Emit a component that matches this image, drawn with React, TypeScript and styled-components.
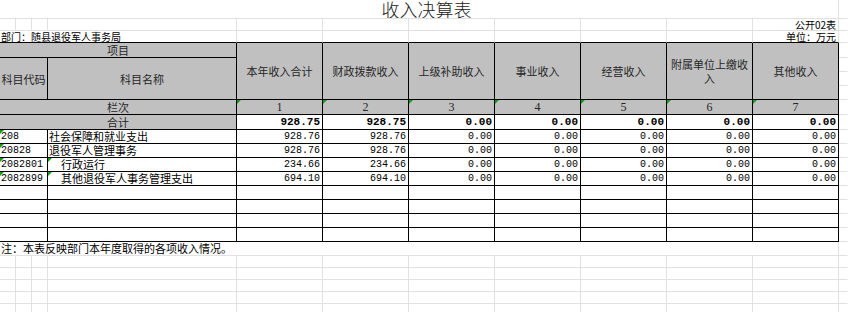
import React from 'react'
import styled, { createGlobalStyle, css } from 'styled-components'

const GlobalStyle = createGlobalStyle`
  html, body {
    margin: 0;
    padding: 0;
    background: #fff;
  }
  body {
    font-family: "Noto Sans CJK SC", "Noto Sans", sans-serif;
  }
`

type Edge = 'ink' | 'grid' | 'none'

const edge = (e: Edge = 'grid') =>
  e === 'ink' ? '1px solid #000' : e === 'grid' ? '1px solid #e1e1e1' : '1px solid transparent'

const Sheet = styled.table`
  border-collapse: separate;
  border-spacing: 0;
  table-layout: fixed;
  width: 848px;
  font-family: "Noto Sans CJK SC", sans-serif;
  font-size: 11px;
  color: #000;
`

const Col = styled.col<{ $w: number }>`
  width: ${({ $w }) => $w}px;
`

const Row = styled.tr<{ $h: number }>`
  height: ${({ $h }) => $h}px;
`

const Cell = styled.td<{ $r?: Edge; $b?: Edge; $align?: 'left' | 'center' | 'right' }>`
  position: relative;
  box-sizing: border-box;
  padding: 0 1px;
  border-right: ${({ $r }) => edge($r)};
  border-bottom: ${({ $b }) => edge($b)};
  text-align: ${({ $align }) => $align || 'left'};
  vertical-align: bottom;
  white-space: nowrap;
  overflow: hidden;
  line-height: 11px;
`

const TitleCell = styled(Cell)`
  padding-left: 16px;
  font-size: 18px;
  font-weight: 300;
  line-height: 18px;
  text-align: center;
  color: #222;
`

const LabelCell = styled(Cell)`
  font-size: 10px;
  line-height: 11px;
  padding-right: 2px;
`

const HeadCell = styled(Cell)<{ $tight?: boolean }>`
  background: #c0c0c0;
  color: #262626;
  text-align: center;
  vertical-align: middle;
  white-space: ${({ $tight }) => ($tight ? 'nowrap' : 'normal')};
  line-height: 14px;
  padding: 0 ${({ $tight }) => ($tight ? '0' : '4px')};
`

const IndexCell = styled(HeadCell)`
  font-family: "Liberation Serif", "Noto Sans CJK SC", serif;
  font-size: 12px;
  line-height: 13px;
  vertical-align: bottom;
`

const CodeCell = styled(Cell)`
  font-family: "Liberation Mono", monospace;
  font-size: 10px;
  line-height: 12px;
  vertical-align: middle;
`

const NameCell = styled(Cell)<{ $indent?: boolean }>`
  padding-left: ${({ $indent }) => ($indent ? '13px' : '1px')};
  line-height: 13px;
  vertical-align: middle;
`

const NumCell = styled(Cell)<{ $bold?: boolean }>`
  font-family: "Liberation Mono", monospace;
  text-align: right;
  padding-right: 2px;
  line-height: 12px;
  vertical-align: middle;
  ${({ $bold }) =>
    $bold
      ? css`
          font-size: 11px;
          font-weight: bold;
        `
      : css`
          font-size: 10px;
        `}
`

const NoteCell = styled(Cell)`
  line-height: 13px;
  vertical-align: middle;
`

const Flag = styled.span`
  position: absolute;
  top: 0;
  left: 0;
  width: 0;
  height: 0;
  border-top: 4px solid #11a011;
  border-right: 4px solid transparent;
`

const widths = [16, 16, 16, 189, 86, 86, 86, 86, 86, 86, 86, 9]

const heads = ['本年收入合计', '财政拨款收入', '上级补助收入', '事业收入', '经营收入', '附属单位上缴收入', '其他收入']

const rows = [
  { code: '208', name: '社会保障和就业支出', indent: false, values: ['928.76', '928.76'] },
  { code: '20828', name: '退役军人管理事务', indent: false, values: ['928.76', '928.76'] },
  { code: '2082801', name: '行政运行', indent: true, values: ['234.66', '234.66'] },
  { code: '2082899', name: '其他退役军人事务管理支出', indent: true, values: ['694.10', '694.10'] },
]

const zeros = ['0.00', '0.00', '0.00', '0.00', '0.00']

function Blanks({ count, r = 'grid', b = 'grid' }: { count: number; r?: Edge; b?: Edge }) {
  return (
    <>
      {Array.from({ length: count }, (_, i) => (
        <Cell key={i} $r={r} $b={b} />
      ))}
    </>
  )
}

// the narrow column cut off by the window edge
const Tail = ({ b = 'grid' }: { b?: Edge }) => <Cell $r="none" $b={b} />

export default function App() {
  return (
    <>
      <GlobalStyle />
      <Sheet>
        <colgroup>
          {widths.map((w, i) => (
            <Col key={i} $w={w} />
          ))}
        </colgroup>
        <tbody>
          <Row $h={19}>
            <TitleCell colSpan={11}>收入决算表</TitleCell>
            <Tail />
          </Row>
          <Row $h={12}>
            <Blanks count={10} />
            <LabelCell $align="right">公开02表</LabelCell>
            <Tail />
          </Row>
          <Row $h={12}>
            <LabelCell colSpan={4} $b="ink">
              部门：随县退役军人事务局
            </LabelCell>
            <Blanks count={6} b="ink" />
            <LabelCell $align="right" $b="ink">
              单位：万元
            </LabelCell>
            <Tail />
          </Row>

          <Row $h={14}>
            <HeadCell colSpan={4} $r="ink" $b="ink">
              项目
            </HeadCell>
            {heads.map((h) => (
              <HeadCell key={h} rowSpan={4} $r="ink" $b="ink">
                {h}
              </HeadCell>
            ))}
            <Tail />
          </Row>
          <Row $h={14}>
            <HeadCell colSpan={3} rowSpan={3} $tight $r="ink" $b="ink">
              科目代码
            </HeadCell>
            <HeadCell rowSpan={3} $r="ink" $b="ink">
              科目名称
            </HeadCell>
            <Tail />
          </Row>
          <Row $h={14}>
            <Tail />
          </Row>
          <Row $h={14}>
            <Tail />
          </Row>

          <Row $h={14}>
            <HeadCell colSpan={4} $r="ink" $b="ink">
              栏次
            </HeadCell>
            {heads.map((_, i) => (
              <IndexCell key={i} $r="ink" $b="ink">
                <Flag />
                {i + 1}
              </IndexCell>
            ))}
            <Tail />
          </Row>
          <Row $h={14}>
            <HeadCell colSpan={4} $r="ink" $b="ink">
              合计
            </HeadCell>
            <NumCell $bold $r="ink" $b="ink">928.75</NumCell>
            <NumCell $bold $r="ink" $b="ink">928.75</NumCell>
            {zeros.map((z, i) => (
              <NumCell key={i} $bold $r="ink" $b="ink">
                {z}
              </NumCell>
            ))}
            <Tail />
          </Row>
          {rows.map((row) => (
            <Row key={row.code} $h={14}>
              <CodeCell colSpan={3} $r="ink" $b="ink">
                <Flag />
                {row.code}
              </CodeCell>
              <NameCell $indent={row.indent} $r="ink" $b="ink">
                {row.indent && <Flag />}
                {row.name}
              </NameCell>
              {[...row.values, ...zeros].map((v, i) => (
                <NumCell key={i} $r="ink" $b="ink">
                  {v}
                </NumCell>
              ))}
              <Tail />
            </Row>
          ))}
          {[0, 1, 2, 3].map((n) => (
            <Row key={n} $h={14}>
              <Cell colSpan={3} $r="ink" $b="ink" />
              <Blanks count={8} r="ink" b="ink" />
              <Tail />
            </Row>
          ))}

          <Row $h={14}>
            <NoteCell colSpan={11}>注：本表反映部门本年度取得的各项收入情况。</NoteCell>
            <Tail />
          </Row>
          {[0, 1, 2, 3, 4].map((n) => (
            <Row key={n} $h={12}>
              <Blanks count={11} />
              <Tail />
            </Row>
          ))}
        </tbody>
      </Sheet>
    </>
  )
}
